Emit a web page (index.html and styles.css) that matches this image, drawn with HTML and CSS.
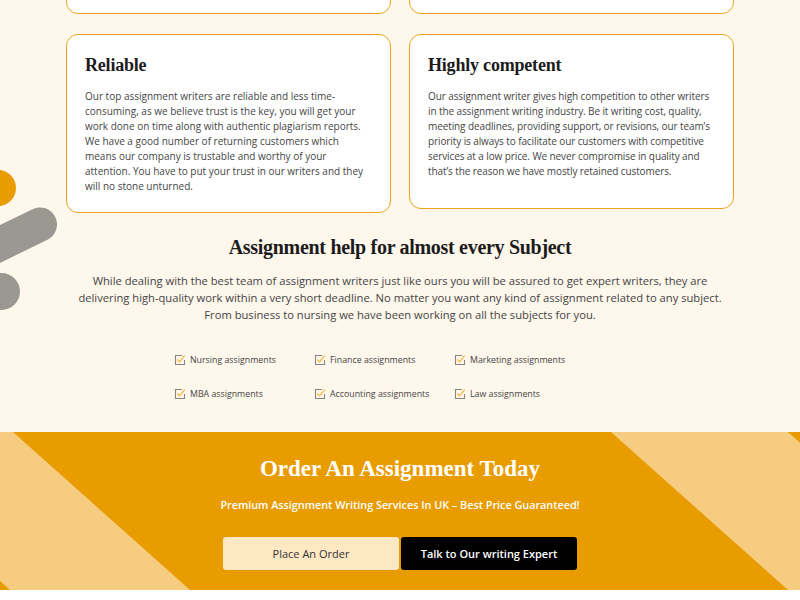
FILE: index.html
```html
<!DOCTYPE html>
<html lang="en">
<head>
<meta charset="utf-8">
<title>Assignment help</title>
<link rel="stylesheet" href="styles.css">
</head>
<body>
<main class="page">
  <svg class="deco" width="60" height="160" viewBox="0 160 60 160" aria-hidden="true">
    <circle cx="-2" cy="188" r="18" fill="#E99C00"/>
    <line x1="-20" y1="253.8" x2="40" y2="224.4" stroke="#9B9791" stroke-width="34" stroke-linecap="round"/>
    <circle cx="1.5" cy="291.5" r="18.5" fill="#9B9791"/>
  </svg>
  <div class="container">
    <div class="row row-cut">
      <div class="card card-cut"></div>
      <div class="card card-cut"></div>
    </div>
    <div class="row">
      <div class="card">
        <h3 class="card-title">Reliable</h3>
        <p class="card-text">Our top assignment writers are reliable and less time-consuming, as we believe trust is the key, you will get your work done on time along with authentic plagiarism reports. We have a good number of returning customers which means our company is trustable and worthy of your attention. You have to put your trust in our writers and they will no stone unturned.</p>
      </div>
      <div class="card card-tall">
        <h3 class="card-title">Highly competent</h3>
        <p class="card-text card-text-tight">Our assignment writer gives high competition to other writers in the assignment writing industry. Be it writing cost, quality, meeting deadlines, providing support, or revisions, our team’s priority is always to facilitate our customers with competitive services at a low price. We never compromise in quality and that’s the reason we have mostly retained customers.</p>
      </div>
    </div>
    <h2 class="subjects-title">Assignment help for almost every Subject</h2>
    <p class="subjects-text">While dealing with the best team of assignment writers just like ours you will be assured to get expert writers, they are delivering high-quality work within a very short deadline. No matter you want any kind of assignment related to any subject. From business to nursing we have been working on all the subjects for you.</p>
    <ul class="subjects">
      <li class="subject"><svg class="check" viewBox="0 0 12 12" width="12" height="12"><path d="M8 1.5H1.5v9h9V6" fill="none" stroke="#8A8580" stroke-width="1.1"/><path d="M3.6 5.8l2 2.1 4.8-6" fill="none" stroke="#F2B437" stroke-width="1.2" stroke-linecap="round" stroke-linejoin="round"/></svg>Nursing assignments</li>
      <li class="subject"><svg class="check" viewBox="0 0 12 12" width="12" height="12"><path d="M8 1.5H1.5v9h9V6" fill="none" stroke="#8A8580" stroke-width="1.1"/><path d="M3.6 5.8l2 2.1 4.8-6" fill="none" stroke="#F2B437" stroke-width="1.2" stroke-linecap="round" stroke-linejoin="round"/></svg>Finance assignments</li>
      <li class="subject"><svg class="check" viewBox="0 0 12 12" width="12" height="12"><path d="M8 1.5H1.5v9h9V6" fill="none" stroke="#8A8580" stroke-width="1.1"/><path d="M3.6 5.8l2 2.1 4.8-6" fill="none" stroke="#F2B437" stroke-width="1.2" stroke-linecap="round" stroke-linejoin="round"/></svg>Marketing assignments</li>
      <li class="subject"><svg class="check" viewBox="0 0 12 12" width="12" height="12"><path d="M8 1.5H1.5v9h9V6" fill="none" stroke="#8A8580" stroke-width="1.1"/><path d="M3.6 5.8l2 2.1 4.8-6" fill="none" stroke="#F2B437" stroke-width="1.2" stroke-linecap="round" stroke-linejoin="round"/></svg>MBA assignments</li>
      <li class="subject"><svg class="check" viewBox="0 0 12 12" width="12" height="12"><path d="M8 1.5H1.5v9h9V6" fill="none" stroke="#8A8580" stroke-width="1.1"/><path d="M3.6 5.8l2 2.1 4.8-6" fill="none" stroke="#F2B437" stroke-width="1.2" stroke-linecap="round" stroke-linejoin="round"/></svg>Accounting assignments</li>
      <li class="subject"><svg class="check" viewBox="0 0 12 12" width="12" height="12"><path d="M8 1.5H1.5v9h9V6" fill="none" stroke="#8A8580" stroke-width="1.1"/><path d="M3.6 5.8l2 2.1 4.8-6" fill="none" stroke="#F2B437" stroke-width="1.2" stroke-linecap="round" stroke-linejoin="round"/></svg>Law assignments</li>
    </ul>
  </div>
</main>
<section class="order">
  <svg class="order-bg" viewBox="0 0 800 158" preserveAspectRatio="none" aria-hidden="true">
    <polygon points="0,0 13,0 190,158 10,158 0,149" fill="#F5CC80"/>
    <polygon points="611,0 788,0 800,10.7 800,158 788,158" fill="#F5CC80"/>
  </svg>
  <div class="order-inner">
    <h2 class="order-title">Order An Assignment Today</h2>
    <p class="order-sub">Premium Assignment Writing Services In UK – Best Price Guaranteed!</p>
    <div class="order-actions">
      <a class="btn btn-light" href="#">Place An Order</a>
      <a class="btn btn-dark" href="#">Talk to Our writing Expert</a>
    </div>
  </div>
</section>
<div class="bottom-strip"></div>
</body>
</html>
```

FILE: styles.css
```css
html, body {
  margin: 0;
  padding: 0;
}
body {
  background: #FEF7EC;
  font-family: "Open Sans", "Liberation Sans", sans-serif;
  color: #444;
  overflow: hidden;
}
.page {
  position: relative;
  display: flow-root;
  padding-bottom: 31px;
}
.deco {
  position: absolute;
  left: 0;
  top: 160px;
}
.container {
  width: 668px;
  margin: 0 auto;
  position: relative;
}
.row {
  display: flex;
  gap: 18px;
  align-items: flex-start;
  margin-top: 20px;
}
.row-cut {
  margin-top: -40px;
}
.card {
  flex: 1 1 0;
  background: #fff;
  border: 1px solid #EBA21A;
  border-radius: 12px;
  padding: 18px;
  box-sizing: border-box;
}
.card-cut {
  height: 54px;
}
.card-tall {
  min-height: 175px;
}
.card-title {
  margin: 0;
  font-family: "Liberation Serif", serif;
  font-weight: bold;
  font-size: 18px;
  line-height: 24px;
  letter-spacing: -0.2px;
  color: #1c1c1c;
}
.card-text {
  margin: 12px 0 0;
  font-size: 10px;
  line-height: 15px;
  color: #454545;
}
.card-text-tight {
  letter-spacing: -0.1px;
}
.subjects-title {
  margin: 20px 0 0;
  text-align: center;
  font-family: "Liberation Serif", serif;
  font-weight: bold;
  font-size: 20px;
  line-height: 28px;
  letter-spacing: -0.3px;
  color: #1c1c1c;
}
.subjects-text {
  margin: 11px 0 0;
  text-align: center;
  font-size: 11.2px;
  line-height: 17px;
  color: #444;
}
.subjects {
  list-style: none;
  margin: 30px 0 0 108px;
  padding: 0;
  display: grid;
  grid-template-columns: repeat(3, 140px);
  row-gap: 20px;
}
.subject {
  display: flex;
  align-items: center;
  gap: 4px;
  height: 14px;
  font-size: 8.8px;
  color: #444;
}
.check {
  flex: none;
}
.order {
  position: relative;
  height: 158px;
  background: #E99C00;
  overflow: hidden;
}
.order-bg {
  position: absolute;
  left: 0;
  top: 0;
  width: 100%;
  height: 100%;
}
.order-inner {
  position: relative;
  padding-top: 22px;
  text-align: center;
}
.order-title {
  margin: 0;
  font-family: "Liberation Serif", serif;
  font-weight: bold;
  font-size: 23px;
  line-height: 30px;
  color: #fff;
}
.order-sub {
  margin: 13px 0 0;
  font-size: 10.8px;
  line-height: 16px;
  font-weight: 600;
  color: #fff;
}
.order-actions {
  margin-top: 24px;
  display: flex;
  justify-content: center;
  gap: 2px;
}
.btn {
  width: 176px;
  height: 33px;
  display: flex;
  align-items: center;
  justify-content: center;
  border-radius: 3px;
  font-size: 11px;
  text-decoration: none;
}
.btn-light {
  background: #FDE8C4;
  color: #333;
}
.btn-dark {
  background: #000;
  color: #fff;
  font-weight: 600;
}
.bottom-strip {
  height: 10px;
  background: #fff;
}
```
